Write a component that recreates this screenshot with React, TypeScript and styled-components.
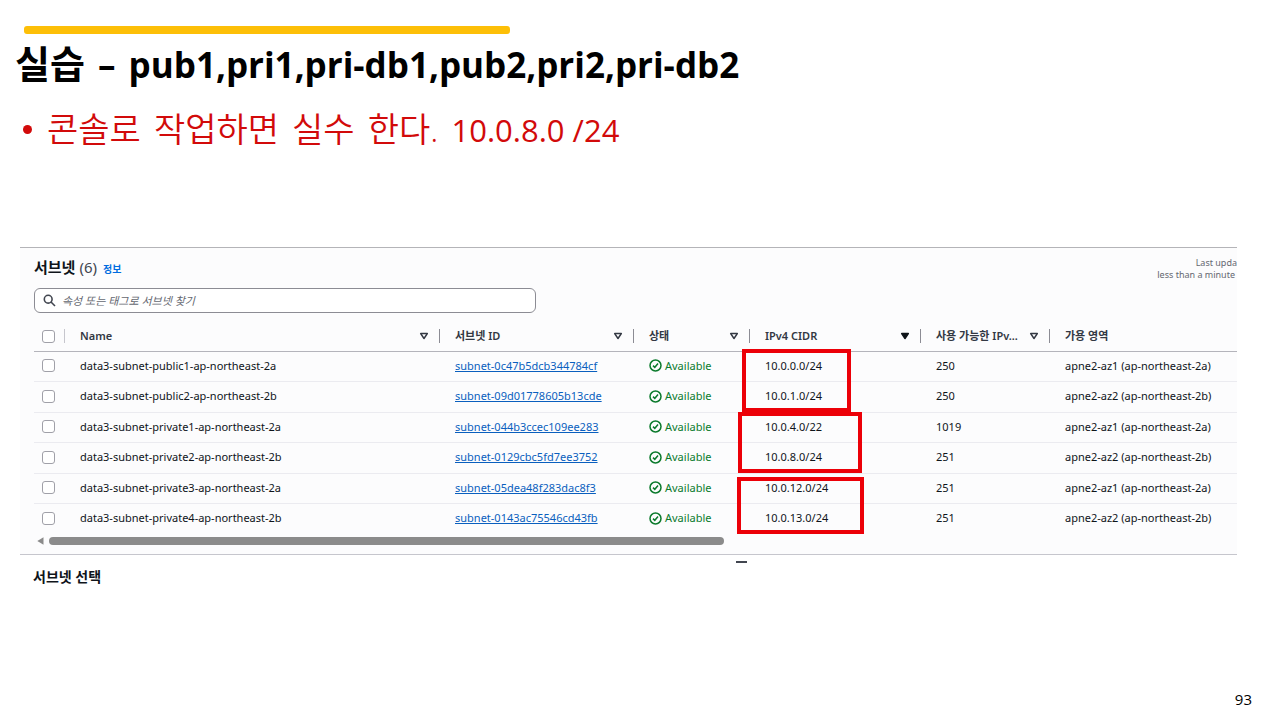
import React from "react";
import styled, { createGlobalStyle } from "styled-components";

const Global = createGlobalStyle`
  * { box-sizing: border-box; }
  body { margin: 0; background: #fff; }
`;

const slideFont = `"Open Sans", "Noto Sans CJK KR", sans-serif`;
const consoleFont = `"Noto Sans", "Noto Sans CJK KR", sans-serif`;

const Slide = styled.main`
  min-height: 100vh;
  display: flex;
  flex-direction: column;
  padding: 26px 43px 9px 20px;
  font-family: ${slideFont};
  color: #000;
`;

const Accent = styled.div`
  width: 40%;
  max-width: 486px;
  height: 8px;
  margin-left: 4px;
  border-radius: 3px;
  background: #fdbf07;
`;

const Title = styled.h1`
  margin: 5px 0 0 -5px;
  height: 48px;
  font-size: 35px;
  line-height: 48px;
  font-weight: 700;
  white-space: nowrap;
`;

const Notes = styled.ul`
  margin: 20px 0 0;
  padding: 0;
  list-style: none;
`;

const Note = styled.li`
  display: flex;
  align-items: center;
  gap: 15px;
  height: 44px;
  padding-left: 3px;
  font-size: 31px;
  line-height: 44px;
  color: #d20a0a;
  white-space: nowrap;

  &::before {
    content: "";
    width: 9px;
    height: 9px;
    border-radius: 50%;
    background: #d20a0a;
  }
`;

const Word = styled.span<{ $size?: number; $light?: boolean }>`
  margin-right: ${(p) => (p.$light ? "5px" : "4px")};
  font-size: ${(p) => (p.$size ? `${p.$size}px` : "inherit")};
  font-weight: ${(p) => (p.$light ? 350 : "inherit")};
`;

const Console = styled.div`
  position: relative;
  margin-top: 96px;
  font-family: ${consoleFont};
  font-size: 11px;
  line-height: 16px;
  color: #0f141a;
`;

const Panel = styled.section`
  padding: 8px 0 7px 14px;
  background: #fcfcfd;
  border-top: 1px solid #b4b4b8;
  border-bottom: 1px solid #c6c6cd;
  overflow: hidden;
`;

const PanelHead = styled.header`
  display: flex;
  justify-content: space-between;
  height: 32px;
`;

const Heading = styled.div`
  display: flex;
  align-items: baseline;
  line-height: 22px;
`;

const PanelTitle = styled.h2`
  margin: 0;
  font-size: 15px;
  font-weight: 700;
`;

const Count = styled.span`
  margin-left: 4px;
  font-size: 15px;
  font-weight: 400;
  color: #424650;
`;

const InfoLink = styled.a`
  margin-left: 6px;
  font-size: 10px;
  font-weight: 700;
  color: #006ce0;
  text-decoration: none;
`;

const Updated = styled.p`
  margin: 1px 0 0;
  font-size: 9px;
  line-height: 12px;
  text-align: right;
  color: #656871;
`;

const UpdatedLine = styled.span<{ $inset?: boolean }>`
  display: block;
  margin-right: ${(p) => (p.$inset ? "2px" : "0")};
`;

const Search = styled.label`
  display: flex;
  align-items: center;
  gap: 6px;
  width: 502px;
  max-width: 100%;
  height: 25px;
  padding: 0 8px;
  border: 1px solid #8c8c94;
  border-radius: 6px;
  background: #fff;
`;

const SearchInput = styled.input`
  flex: 1;
  min-width: 0;
  padding: 0;
  border: 0;
  outline: 0;
  background: none;
  font: inherit;
  color: inherit;

  &::placeholder {
    font-style: italic;
    color: #656871;
    opacity: 1;
  }
`;

const Table = styled.table`
  width: 100%;
  margin-top: 8px;
  table-layout: fixed;
  border-collapse: separate;
  border-spacing: 0;
`;

const Col = styled.col<{ $w?: number }>`
  width: ${(p) => (p.$w ? `${p.$w}px` : "auto")};
`;

const HeadCell = styled.th<{ $pick?: boolean }>`
  height: 31px;
  padding: ${(p) => (p.$pick ? "0 0 0 8px" : "0 0 0 15px")};
  border-bottom: 1px solid #b4b4bb;
  text-align: left;
  font-weight: 600;
  color: #333843;
`;

const HeadInner = styled.div<{ $divider?: string; $sortable?: boolean }>`
  display: flex;
  align-items: center;
  justify-content: space-between;
  height: 14px;
  padding-right: ${(p) => (p.$sortable ? "10px" : "0")};
  white-space: nowrap;
  border-right: 1px solid ${(p) => p.$divider ?? "transparent"};
`;

const SortButton = styled.button`
  display: flex;
  padding: 0;
  border: 0;
  background: none;
`;

const Row = styled.tr`
  height: 30px;

  &:nth-child(even):not(:last-child) {
    height: 31px;
  }

  &:not(:last-child) > td {
    border-bottom: 1px solid #ebebf0;
  }
`;

const Cell = styled.td<{ $pick?: boolean }>`
  padding: ${(p) => (p.$pick ? "0 0 2px 8px" : "0 0 2px 15px")};
  white-space: nowrap;
`;

const Check = styled.input`
  appearance: none;
  display: block;
  flex: none;
  width: 13px;
  height: 13px;
  margin: 0;
  border: 1px solid #a0a0a8;
  border-radius: 3px;
  background: #fff;
`;

const SubnetLink = styled.a`
  color: #0a5fbe;
  text-decoration: underline;
  text-underline-offset: 1px;
`;

const Status = styled.span`
  display: flex;
  align-items: center;
  gap: 3px;
  color: #0b7a2c;
`;

const ScrollBar = styled.div`
  display: flex;
  align-items: center;
  gap: 5px;
  height: 13px;
  padding: 1px 2px 0 3px;
`;

const Thumb = styled.div`
  width: 57%;
  max-width: 675px;
  height: 8px;
  border-radius: 4px;
  background: #8b8b8b;
`;

const Selection = styled.h3`
  margin: 12px 0 0 13px;
  font-size: 14px;
  line-height: 20px;
  font-weight: 700;
`;

/* Hand-drawn marks laid over the console capture. */
const Mark = styled.div<{ $x: number; $y: number; $w: number; $h: number }>`
  position: absolute;
  left: ${(p) => p.$x}px;
  top: ${(p) => p.$y}px;
  width: ${(p) => p.$w}px;
  height: ${(p) => p.$h}px;
  border: 4px solid #ec0008;
  pointer-events: none;
`;

const Handle = styled.div`
  position: absolute;
  left: 716px;
  top: 314px;
  width: 11px;
  height: 2px;
  background: #424650;
`;

const PageNumber = styled.footer`
  margin-top: auto;
  margin-right: -15px;
  text-align: right;
  font-size: 15px;
  line-height: 24px;
`;

const columns = [
  { label: "Name", width: 375, sort: "open" },
  { label: "서브넷 ID", width: 194, sort: "open" },
  { label: "상태", width: 116, sort: "open" },
  { label: "IPv4 CIDR", width: 171, sort: "filled" },
  { label: "사용 가능한 IPv...", width: 129, sort: "open" },
  { label: "가용 영역" },
];

const subnets = [
  ["data3-subnet-public1-ap-northeast-2a", "subnet-0c47b5dcb344784cf", "10.0.0.0/24", "250", "apne2-az1 (ap-northeast-2a)"],
  ["data3-subnet-public2-ap-northeast-2b", "subnet-09d01778605b13cde", "10.0.1.0/24", "250", "apne2-az2 (ap-northeast-2b)"],
  ["data3-subnet-private1-ap-northeast-2a", "subnet-044b3ccec109ee283", "10.0.4.0/22", "1019", "apne2-az1 (ap-northeast-2a)"],
  ["data3-subnet-private2-ap-northeast-2b", "subnet-0129cbc5fd7ee3752", "10.0.8.0/24", "251", "apne2-az2 (ap-northeast-2b)"],
  ["data3-subnet-private3-ap-northeast-2a", "subnet-05dea48f283dac8f3", "10.0.12.0/24", "251", "apne2-az1 (ap-northeast-2a)"],
  ["data3-subnet-private4-ap-northeast-2b", "subnet-0143ac75546cd43fb", "10.0.13.0/24", "251", "apne2-az2 (ap-northeast-2b)"],
];

const SortIcon = ({ filled }: { filled: boolean }) => (
  <svg width="10" height="8" viewBox="0 0 10 8" aria-hidden="true">
    <path
      d="M1.7 1.6h6.6L5 6.5z"
      fill={filled ? "#0f141a" : "none"}
      stroke={filled ? "#0f141a" : "#333843"}
      strokeWidth="1.5"
      strokeLinejoin="round"
    />
  </svg>
);

const SearchIcon = () => (
  <svg width="13" height="13" viewBox="0 0 13 13" fill="none" stroke="#424650" strokeWidth="1.6" aria-hidden="true">
    <circle cx="5.2" cy="5.2" r="3.9" />
    <path d="M8 8l4 4" />
  </svg>
);

const AvailableIcon = () => (
  <svg width="13" height="13" viewBox="0 0 13 13" fill="none" stroke="#0b7a2c" strokeWidth="1.5" aria-hidden="true">
    <circle cx="6.5" cy="6.5" r="5.5" />
    <path d="M4 6.6l1.8 1.7 3.2-3.7" />
  </svg>
);

export default function App() {
  return (
    <>
      <Global />
      <Slide>
        <Accent />
        <Title>
          <Word $size={38}>실습</Word> <Word>–</Word> pub1,pri1,pri-db1,pub2,pri2,pri-db2
        </Title>
        <Notes>
          <Note>
            <span>
              {["콘솔로", "작업하면", "실수", "한다."].map((word) => (
                <React.Fragment key={word}>
                  <Word $size={34} $light>
                    {word}
                  </Word>{" "}
                </React.Fragment>
              ))}
              10.0.8.0 /24
            </span>
          </Note>
        </Notes>
        <Console>
          <Panel>
            <PanelHead>
              <Heading>
                <PanelTitle>서브넷</PanelTitle>
                <Count>(6)</Count>
                <InfoLink href="#info">정보</InfoLink>
              </Heading>
              <Updated>
                <UpdatedLine>Last upda</UpdatedLine>
                <UpdatedLine $inset>less than a minute</UpdatedLine>
              </Updated>
            </PanelHead>
            <Search>
              <SearchIcon />
              <SearchInput type="search" aria-label="서브넷 찾기" placeholder="속성 또는 태그로 서브넷 찾기" />
            </Search>
            <Table>
              <colgroup>
                <Col $w={31} />
                {columns.map((c) => (
                  <Col key={c.label} $w={c.width} />
                ))}
              </colgroup>
              <thead>
                <tr>
                  <HeadCell $pick>
                    <HeadInner $divider="#c6c6cd">
                      <Check type="checkbox" aria-label="모두 선택" />
                    </HeadInner>
                  </HeadCell>
                  {columns.map((c) => (
                    <HeadCell key={c.label} scope="col">
                      <HeadInner $sortable={!!c.sort} $divider={c.sort ? "#8c8c94" : undefined}>
                        {c.label}
                        {c.sort && (
                          <SortButton type="button" aria-label={`${c.label} 정렬`}>
                            <SortIcon filled={c.sort === "filled"} />
                          </SortButton>
                        )}
                      </HeadInner>
                    </HeadCell>
                  ))}
                </tr>
              </thead>
              <tbody>
                {subnets.map(([name, id, cidr, free, zone]) => (
                  <Row key={id}>
                    <Cell $pick>
                      <Check type="checkbox" aria-label={name} />
                    </Cell>
                    <Cell>{name}</Cell>
                    <Cell>
                      <SubnetLink href={`#${id}`}>{id}</SubnetLink>
                    </Cell>
                    <Cell>
                      <Status>
                        <AvailableIcon />
                        Available
                      </Status>
                    </Cell>
                    <Cell>{cidr}</Cell>
                    <Cell>{free}</Cell>
                    <Cell>{zone}</Cell>
                  </Row>
                ))}
              </tbody>
            </Table>
            <ScrollBar>
              <svg width="7" height="8" viewBox="0 0 7 8" aria-hidden="true">
                <path d="M6.5 0.3v7.4L0.3 4z" fill="#8b8b8b" />
              </svg>
              <Thumb />
            </ScrollBar>
          </Panel>
          <Selection>서브넷 선택</Selection>
          <Mark $x={722} $y={102} $w={109} $h={63} />
          <Mark $x={718} $y={165} $w={124} $h={61} />
          <Mark $x={717} $y={230} $w={127} $h={57} />
          <Handle />
        </Console>
        <PageNumber>93</PageNumber>
      </Slide>
    </>
  );
}
